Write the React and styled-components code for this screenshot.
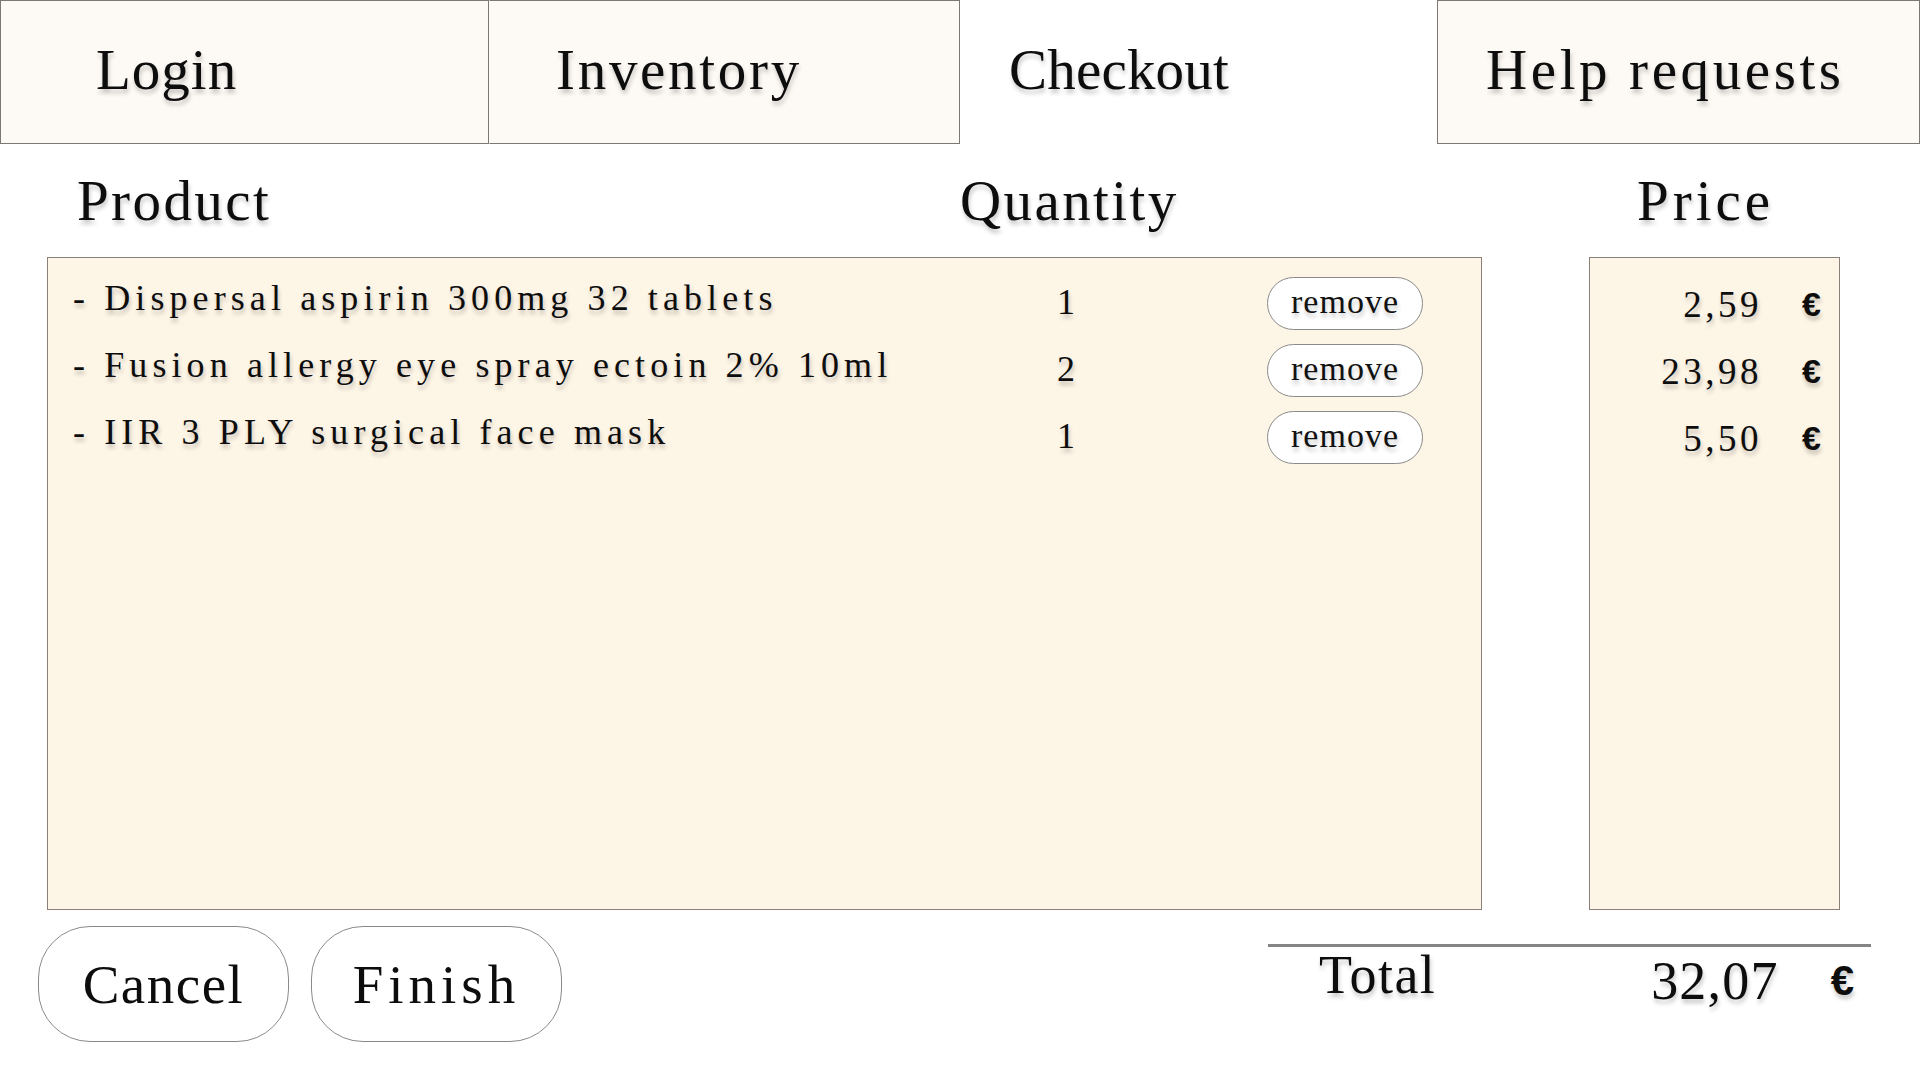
import styled, { createGlobalStyle } from "styled-components";

const GlobalStyle = createGlobalStyle`
  * { box-sizing: border-box; }
  body {
    margin: 0;
    background: #ffffff;
    color: #0d0d0d;
    font-family: "Liberation Serif", "Times New Roman", serif;
  }
`;

const Page = styled.div`
  width: 1920px;
  height: 1080px;
  display: flex;
  flex-direction: column;
  text-shadow: 1px 4px 4px rgba(0, 0, 0, 0.22);
`;

const TabBar = styled.nav`
  display: flex;
  height: 144px;
`;

const Tab = styled.div`
  width: ${(p) => p.$width}px;
  display: flex;
  align-items: center;
  padding-left: ${(p) => p.$pad}px;
  padding-bottom: 6px;
  background: ${(p) => (p.$active ? "#ffffff" : "#fdfaf5")};
  border: 1px solid ${(p) => (p.$active ? "transparent" : "#7a7775")};
  border-left-color: ${(p) => (p.$noLeft || p.$active ? "transparent" : "#7a7775")};
  font-size: 57px;
  letter-spacing: ${(p) => p.$spacing}px;
  cursor: pointer;
`;

const Board = styled.div`
  display: grid;
  grid-template-columns: 1435px 251px;
  grid-template-rows: 113px 653px;
  column-gap: 107px;
  padding-left: 47px;
`;

const HeadGroup = styled.div`
  display: grid;
  grid-template-columns: ${(p) => p.$cols};
  align-items: center;
  padding-left: ${(p) => p.$pad}px;
`;

const ColumnHead = styled.div`
  font-size: 57px;
  letter-spacing: ${(p) => p.$spacing ?? 2.4}px;
  line-height: 60px;
`;

const ListBox = styled.div`
  background: #fdf5e6;
  border: 1px solid #8c7f79;
  padding: 12px 0 0 25px;
`;

const ItemRow = styled.div`
  display: grid;
  grid-template-columns: 953px 80px 161px 156px;
  align-items: start;
  height: 67px;
`;

const ItemName = styled.div`
  font-size: 36px;
  letter-spacing: 5.1px;
  line-height: 57px;
  white-space: nowrap;
`;

const Qty = styled.div`
  font-size: 36px;
  line-height: 64px;
  text-align: center;
`;

const RemoveButton = styled.button`
  margin-top: 7px;
  height: 53px;
  border: 1px solid #8a8a8a;
  border-radius: 27px;
  background: #ffffff;
  font-family: inherit;
  font-size: 34px;
  letter-spacing: 1px;
  color: #111;
  text-shadow: 1px 4px 4px rgba(0, 0, 0, 0.22);
  padding: 0 0 4px;
  cursor: pointer;
`;

const PriceBox = styled.div`
  background: #fdf5e6;
  border: 1px solid #8c7f79;
  padding: 13px 18px 0 0;
`;

const PriceRow = styled.div`
  display: flex;
  justify-content: flex-end;
  align-items: center;
  height: 67px;
`;

const Amount = styled.span`
  font-size: ${(p) => p.$size}px;
  letter-spacing: ${(p) => p.$spacing}px;
`;

const Euro = styled.span`
  font-family: "Liberation Sans", Arial, sans-serif;
  font-weight: bold;
  font-size: ${(p) => p.$size}px;
  margin-left: ${(p) => p.$gap}px;
`;

const Footer = styled.div`
  display: flex;
  align-items: flex-start;
  padding: 16px 0 0 38px;
`;

const ActionButton = styled.button`
  width: 251px;
  height: 116px;
  margin-right: 22px;
  border: 1px solid #8a8a8a;
  border-radius: 52px;
  background: #ffffff;
  font-family: inherit;
  font-size: 55px;
  letter-spacing: ${(p) => p.$spacing}px;
  color: #0d0d0d;
  cursor: pointer;
`;

const TotalBlock = styled.div`
  margin: 18px 0 0 684px;
  width: 603px;
  border-top: 3px solid #858585;
`;

const TotalRow = styled.div`
  display: flex;
  align-items: flex-start;
  padding: 0 17px 0 51px;
`;

const TotalLabel = styled.div`
  flex: 1;
  font-size: 54px;
  letter-spacing: 1.4px;
  line-height: 56px;
`;

const TotalValue = styled.div`
  display: flex;
  align-items: center;
  margin-top: 6px;
  line-height: 56px;
`;

const tabs = [
  { label: "Login", width: 489, pad: 95, spacing: 1 },
  { label: "Inventory", width: 471, pad: 66, spacing: 2.7, noLeft: true },
  { label: "Checkout", width: 477, pad: 48, spacing: 0.2, active: true },
  { label: "Help requests", width: 483, pad: 48, spacing: 3.6 },
];

const items = [
  { name: "- Dispersal aspirin 300mg 32 tablets", qty: 1, price: "2,59" },
  { name: "- Fusion allergy eye spray ectoin 2% 10ml", qty: 2, price: "23,98" },
  { name: "- IIR 3 PLY surgical face mask", qty: 1, price: "5,50" },
];

export default function App() {
  return (
    <Page>
      <GlobalStyle />
      <TabBar>
        {tabs.map((t) => (
          <Tab
            key={t.label}
            $width={t.width}
            $pad={t.pad}
            $spacing={t.spacing}
            $active={t.active}
            $noLeft={t.noLeft}
          >
            {t.label}
          </Tab>
        ))}
      </TabBar>

      <Board>
        <HeadGroup $cols="883px auto" $pad={30}>
          <ColumnHead>Product</ColumnHead>
          <ColumnHead>Quantity</ColumnHead>
        </HeadGroup>
        <HeadGroup $cols="auto" $pad={48}>
          <ColumnHead $spacing={4}>Price</ColumnHead>
        </HeadGroup>

        <ListBox>
          {items.map((it) => (
            <ItemRow key={it.name}>
              <ItemName>{it.name}</ItemName>
              <Qty>{it.qty}</Qty>
              <span />
              <RemoveButton>remove</RemoveButton>
            </ItemRow>
          ))}
        </ListBox>

        <PriceBox>
          {items.map((it) => (
            <PriceRow key={it.name}>
              <Amount $size={37} $spacing={3.5}>{it.price}</Amount>
              <Euro $size={34} $gap={40}>€</Euro>
            </PriceRow>
          ))}
        </PriceBox>
      </Board>

      <Footer>
        <ActionButton $spacing={1.5}>Cancel</ActionButton>
        <ActionButton $spacing={5}>Finish</ActionButton>
        <TotalBlock>
          <TotalRow>
            <TotalLabel>Total</TotalLabel>
            <TotalValue>
              <Amount $size={54} $spacing={1.2}>32,07</Amount>
              <Euro $size={42} $gap={52}>€</Euro>
            </TotalValue>
          </TotalRow>
        </TotalBlock>
      </Footer>
    </Page>
  );
}
